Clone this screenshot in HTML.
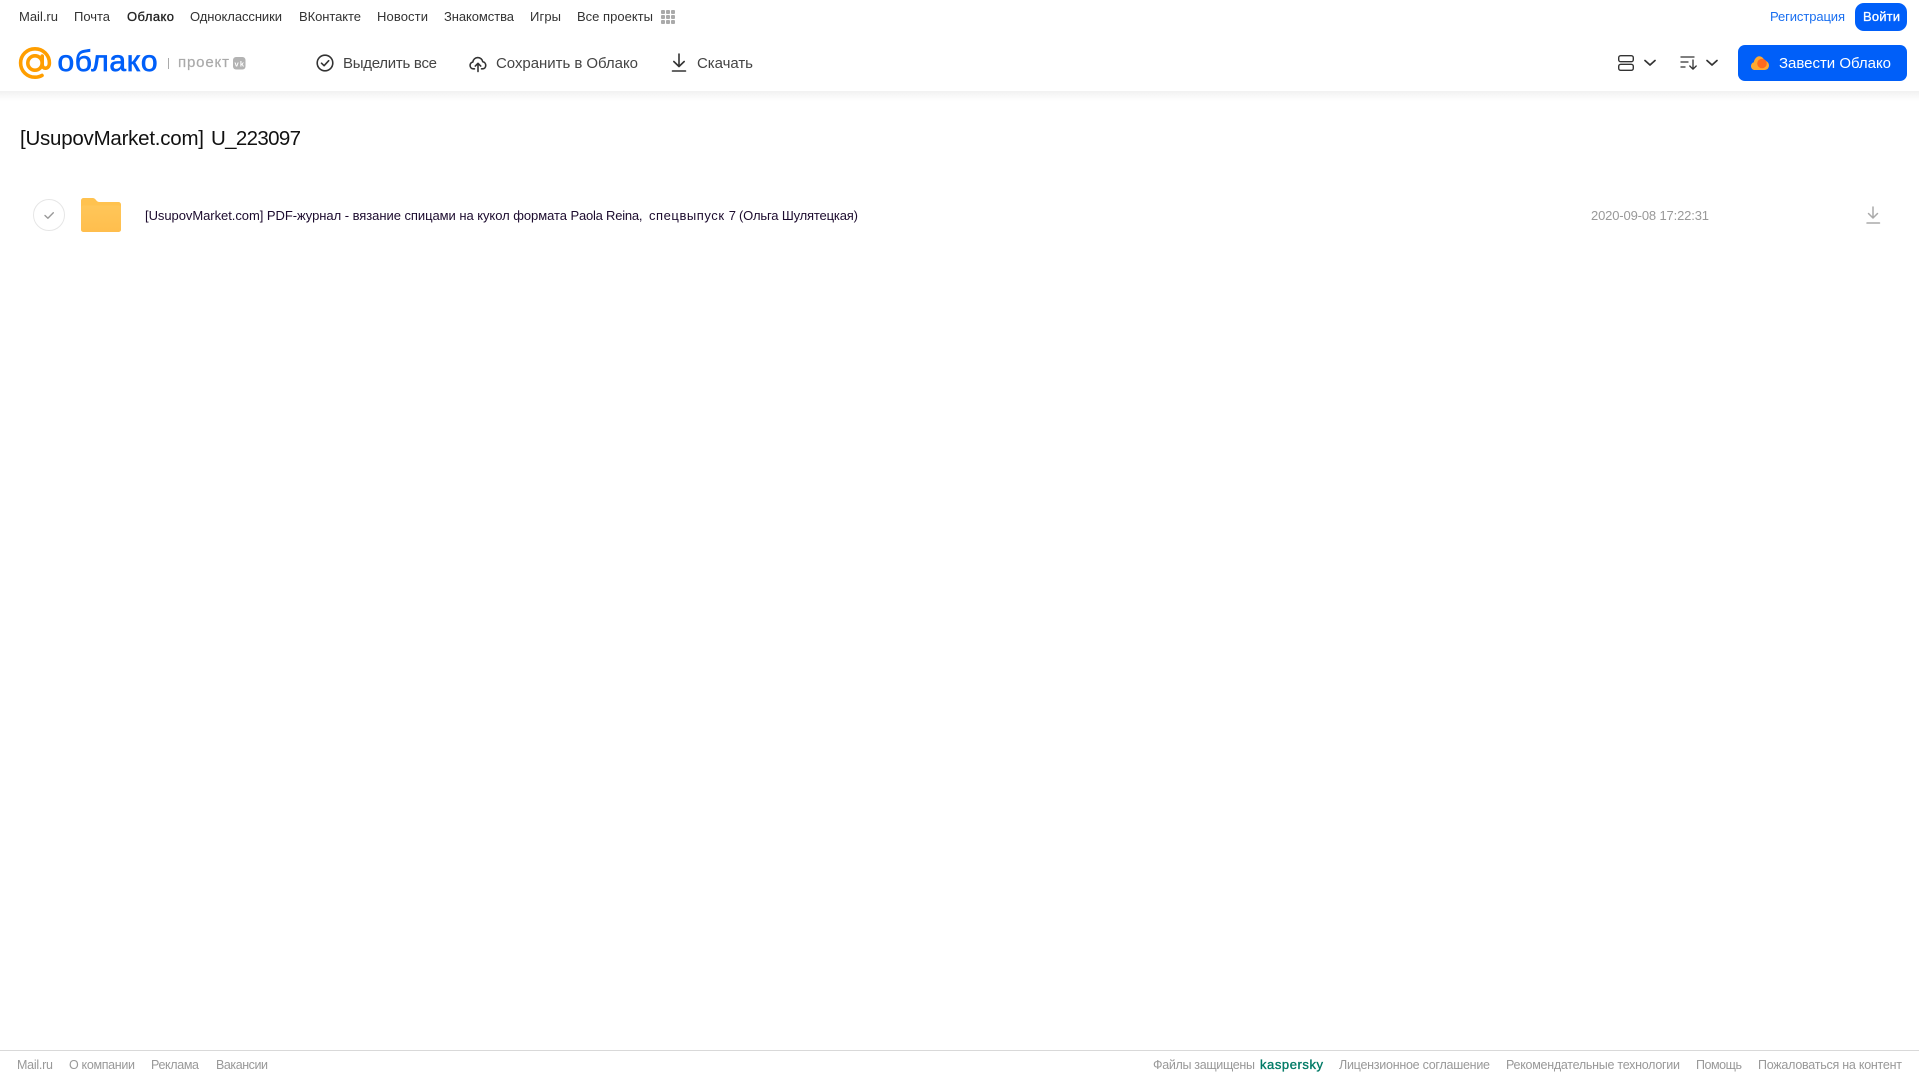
<!DOCTYPE html>
<html lang="ru">
<head>
<meta charset="utf-8">
<title>[UsupovMarket.com] U_223097</title>
<style>
html,body{margin:0;padding:0;background:#fff;width:1919px;height:1079px;overflow:hidden}
svg{display:block;position:absolute;left:0;top:0}
text{font-family:"Liberation Sans",Arial,sans-serif}
.n{font-size:13px;fill:#333}
.t{font-size:15px;fill:#444}
.f{font-size:12.5px;fill:#999}
.r{font-size:13px;fill:#1c0b2e}
</style>
</head>
<body>
<svg width="1919" height="1079" viewBox="0 0 1919 1079" xmlns="http://www.w3.org/2000/svg">
<defs>
<linearGradient id="sh" x1="0" y1="0" x2="0" y2="1"><stop offset="0" stop-color="#f1f1f1"/><stop offset="1" stop-color="#fff"/></linearGradient>
<linearGradient id="fd" x1="0" y1="0" x2="0" y2="1"><stop offset="0" stop-color="#ffc659"/><stop offset="1" stop-color="#ffbe4d"/></linearGradient>
</defs>
<rect x="0" y="91" width="1919" height="10" fill="url(#sh)"/>

<!-- top nav -->
<text class="n" x="19" y="21" textLength="39">Mail.ru</text>
<text class="n" x="74" y="21" textLength="36">Почта</text>
<text class="n" x="127" y="21" textLength="47" stroke="#222" stroke-width=".3" style="fill:#222">Облако</text>
<text class="n" x="190" y="21" textLength="92">Одноклассники</text>
<text class="n" x="299" y="21" textLength="62">ВКонтакте</text>
<text class="n" x="377" y="21" textLength="51">Новости</text>
<text class="n" x="444" y="21" textLength="70">Знакомства</text>
<text class="n" x="530" y="21" textLength="31">Игры</text>
<text class="n" x="577" y="21" textLength="76">Все проекты</text>
<g fill="#aaa">
<rect x="661" y="10" width="4" height="4" rx="1"/><rect x="666" y="10" width="4" height="4" rx="1"/><rect x="671" y="10" width="4" height="4" rx="1"/>
<rect x="661" y="15" width="4" height="4" rx="1"/><rect x="666" y="15" width="4" height="4" rx="1"/><rect x="671" y="15" width="4" height="4" rx="1"/>
<rect x="661" y="20" width="4" height="4" rx="1"/><rect x="666" y="20" width="4" height="4" rx="1"/><rect x="671" y="20" width="4" height="4" rx="1"/>
</g>
<text x="1770" y="21" font-size="13" fill="#1a6ff0" textLength="75">Регистрация</text>
<rect x="1855" y="3" width="52" height="28" rx="9" fill="#005ff9"/>
<text x="1863" y="21" font-size="13" fill="#fff" stroke="#fff" stroke-width=".3" textLength="37">Войти</text>

<!-- logo -->
<g fill="none" stroke="#ff9e00" stroke-width="3.6" stroke-linecap="round">
<circle cx="35" cy="63" r="7.2"/>
<path d="M42.2 56v8.500c0 5.200 7.200 5.200 7.200-1.500 0-8-6.400-14.200-14.400-14.200S20.600 55 20.600 63 27 77.200 35 77.200c2.600 0 5-.6 7-1.800"/>
</g>
<text x="57.500" y="71" font-size="30" fill="#005ff9" stroke="#005ff9" stroke-width=".7" textLength="100">облако</text>
<rect x="168" y="58" width="1" height="11" fill="#aaa"/>
<text x="178" y="67" font-size="15" fill="#aaa" stroke="#aaa" stroke-width=".2" textLength="51">проект</text>
<rect x="233" y="57" width="12.500" height="12.500" rx="3" fill="#b3b3b3"/>
<text x="234.500" y="66.500" font-size="7.500" font-weight="700" fill="#fff" textLength="9.500">vk</text>

<!-- toolbar -->
<circle cx="325" cy="63" r="7.800" fill="none" stroke="#333" stroke-width="1.600"/>
<path d="M321.500 63.200l2.600 2.500 4.600-5" fill="none" stroke="#333" stroke-width="1.600" stroke-linecap="round" stroke-linejoin="round"/>
<text class="t" x="343" y="68" textLength="94">Выделить все</text>

<g transform="translate(478 64) scale(.88) translate(-478 -64)">
<path d="M474 69.500h-1.200c-2.300 0-3.800-1.800-3.800-3.900 0-2 1.300-3.500 3.100-3.800.4-3 2.800-5.100 5.700-5.100 2.800 0 5.100 2 5.600 4.700 1.900.3 3.400 2.100 3.400 4.200 0 2.300-1.600 3.900-3.800 3.900H482" fill="none" stroke="#333" stroke-width="1.800" stroke-linecap="round" stroke-linejoin="round"/>
<path d="M478 72.500v-9M474.900 66.300l3.100-3.100 3.100 3.100" fill="none" stroke="#333" stroke-width="1.800" stroke-linecap="round" stroke-linejoin="round"/>
</g>
<text class="t" x="496" y="68" textLength="142">Сохранить в Облако</text>

<path d="M679 54v12M673.800 61.500l5.200 5 5.200-5M672.500 71h13" fill="none" stroke="#333" stroke-width="1.600" stroke-linecap="round" stroke-linejoin="round"/>
<text class="t" x="697" y="68" textLength="56">Скачать</text>

<!-- right tools -->
<rect x="1618.700" y="55.700" width="14.600" height="6" rx="2" fill="none" stroke="#333" stroke-width="1.400"/>
<rect x="1618.700" y="64.300" width="14.600" height="6" rx="2" fill="none" stroke="#333" stroke-width="1.400"/>
<path d="M1645 60.500l5 4.500 5-4.500" fill="none" stroke="#333" stroke-width="1.700" stroke-linecap="round" stroke-linejoin="round"/>
<path d="M1681 57h13M1681 62h7M1681 67h4M1693 60v9M1689.800 66l3.200 3.200 3.200-3.200" fill="none" stroke="#333" stroke-width="1.300" stroke-linecap="round" stroke-linejoin="round"/>
<path d="M1707 60.500l5 4.500 5-4.500" fill="none" stroke="#333" stroke-width="1.700" stroke-linecap="round" stroke-linejoin="round"/>
<rect x="1738" y="45" width="169" height="36" rx="7" fill="#005ff9"/>
<path d="M1755 70c-2.500 0-4-1.800-4-3.900 0-1.900 1.200-3.400 2.800-3.800.5-3 2.800-6 5.400-6 2.500 0 4.400 1.800 5.200 4.400 2.700 0 4.600 2.300 4.600 4.800 0 2.500-1.900 4.500-4.500 4.500z" fill="#ffa930"/>
<circle cx="1762" cy="63.500" r="4.800" fill="#ff6a1f"/>
<text x="1779" y="68" font-size="15" fill="#fff" textLength="112">Завести Облако</text>

<!-- title -->
<text x="20" y="145" font-size="20.500" fill="#111" textLength="184">[UsupovMarket.com]</text>
<text x="211" y="145" font-size="20.500" fill="#111" textLength="90">U_223097</text>

<!-- row -->
<circle cx="49" cy="215" r="15.500" fill="#fff" stroke="#e6e6e6" stroke-width="1"/>
<path d="M45 215.500l2.900 2.700 5.400-5.400" fill="none" stroke="#999" stroke-width="1.400" stroke-linecap="round" stroke-linejoin="round"/>
<path d="M81 200.500a2.500 2.500 0 0 1 2.500-2.500h8.500c2.500 0 3.200 1 4.200 2.200.9 1 1.600 1.800 3.300 1.800h19a2.500 2.500 0 0 1 2.500 2.500v25a2.500 2.500 0 0 1-2.500 2.500h-35a2.500 2.500 0 0 1-2.500-2.500z" fill="#ffc24f"/>
<path d="M81 208a2.500 2.500 0 0 1 2.500-2.500h35a2.500 2.500 0 0 1 2.500 2.500v21.500a2.500 2.500 0 0 1-2.500 2.500h-35a2.500 2.500 0 0 1-2.500-2.500z" fill="url(#fd)"/>
<text class="r" x="145" y="220" textLength="422">[UsupovMarket.com] PDF-журнал - вязание спицами на кукол формата</text>
<text class="r" x="570.500" y="220" textLength="72">Paola Reina,</text>
<text class="r" x="649" y="220" textLength="87">спецвыпуск 7</text>
<text class="r" x="739" y="220" textLength="119">(Ольга Шулятецкая)</text>
<text x="1591" y="220" font-size="13" fill="#999" textLength="118">2020-09-08 17:22:31</text>
<path d="M1873 207v11M1868.500 213.500l4.500 4.500 4.500-4.500M1867 223h12.500" fill="none" stroke="#aaa" stroke-width="1.500" stroke-linecap="round" stroke-linejoin="round"/>

<!-- footer -->
<rect x="0" y="1050" width="1919" height="1" fill="#d9d9d9"/>
<text class="f" x="17" y="1069" textLength="36">Mail.ru</text>
<text class="f" x="69" y="1069" textLength="66">О компании</text>
<text class="f" x="151" y="1069" textLength="48">Реклама</text>
<text class="f" x="216" y="1069" textLength="52">Вакансии</text>
<text class="f" x="1153" y="1069" textLength="102">Файлы защищены</text>
<text x="1260" y="1069" font-size="13" fill="#007a66" stroke="#007a66" stroke-width=".35" textLength="63">kaspersky</text>
<text class="f" x="1339" y="1069" textLength="151">Лицензионное соглашение</text>
<text class="f" x="1506" y="1069" textLength="174">Рекомендательные технологии</text>
<text class="f" x="1696" y="1069" textLength="46">Помощь</text>
<text class="f" x="1758" y="1069" textLength="144">Пожаловаться на контент</text>
</svg>
</body>
</html>
